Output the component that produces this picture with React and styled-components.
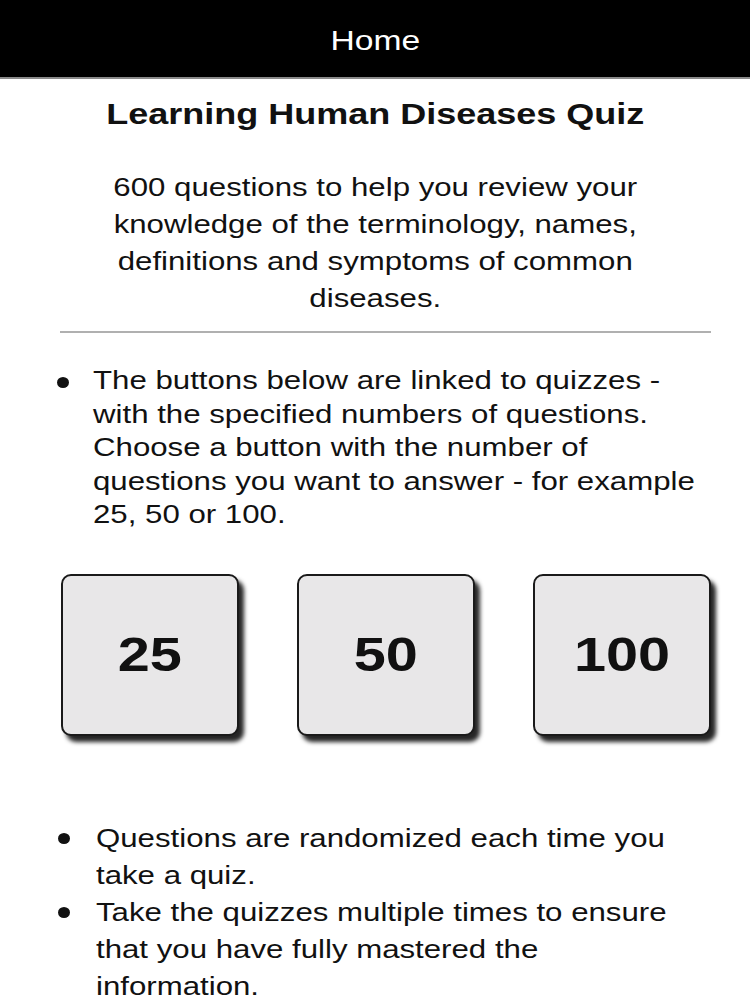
import React from 'react';
import styled, { createGlobalStyle } from 'styled-components';

const GlobalStyle = createGlobalStyle`
    body {
        margin: 0;
        background: #ffffff;
        font-family: "Liberation Sans", Arial, Helvetica, sans-serif;
        color: #111111;
    }
`

const Page = styled.div`
    width: 750px;
    min-height: 1000px;
    overflow: hidden;
`

const Stretch = styled.span`
    display: inline-block;
    transform: scaleX(1.2);
    transform-origin: ${p => p.origin || 'center'};
`

const Header = styled.header`
    height: 79px;
    box-sizing: border-box;
    padding-top: 4px;
    background: #000000;
    border-bottom: 2px solid #8a8a8a;
    display: flex;
    align-items: center;
    justify-content: center;
    color: #ffffff;
    font-size: 28px;
`

const Title = styled.h1`
    margin: 17px 0 0;
    text-align: center;
    font-size: 30px;
    font-weight: bold;
    line-height: 36px;
`

const Intro = styled.p`
    margin: 37px 0 0;
    text-align: center;
    font-size: 26px;
    line-height: 37px;
`

const Divider = styled.hr`
    margin: 14px 39px 0 60px;
    border: none;
    border-top: 2px solid #b0b0b0;
`

const List = styled.ul`
    margin: ${p => p.top}px 0 0;
    padding: 0 0 0 ${p => p.indent}px;
    list-style: none;
    font-size: 26px;
    line-height: ${p => p.lh}px;
    white-space: nowrap;
`

const Item = styled.li`
    position: relative;

    &::before {
        content: '';
        position: absolute;
        left: ${p => p.dot}px;
        top: ${p => p.dotTop}px;
        width: 12px;
        height: 11px;
        border-radius: 50%;
        background: #111111;
    }
`

const ButtonRow = styled.div`
    display: flex;
    gap: 58px;
    padding: 0 0 0 61px;
    margin-top: 42px;
`

const QuizButton = styled.button`
    width: 178px;
    height: 162px;
    background: #e8e7e8;
    border: 2px solid #1a1a1a;
    border-radius: 10px;
    box-shadow: 5px 6px 4px rgba(0, 0, 0, 0.85);
    font-family: "Liberation Sans", Arial, Helvetica, sans-serif;
    font-size: 48px;
    font-weight: bold;
    color: #111111;
    cursor: pointer;
    padding: 0;
`

const quizzes = [25, 50, 100]

const App = () => {
    return (
        <Page>
            <GlobalStyle />
            <Header><Stretch>Home</Stretch></Header>
            <Title><Stretch>Learning Human Diseases Quiz</Stretch></Title>
            <Intro>
                <Stretch>
                    600 questions to help you review your<br />
                    knowledge of the terminology, names,<br />
                    definitions and symptoms of common<br />
                    diseases.
                </Stretch>
            </Intro>
            <Divider />
            <List top={31} indent={93} lh={33.5}>
                <Item dot={-36} dotTop={13}>
                    <Stretch origin="left">
                        The buttons below are linked to quizzes -<br />
                        with the specified numbers of questions.<br />
                        Choose a button with the number of<br />
                        questions you want to answer - for example<br />
                        25, 50 or 100.
                    </Stretch>
                </Item>
            </List>
            <ButtonRow>
                {quizzes.map(n => <QuizButton key={n}><Stretch>{n}</Stretch></QuizButton>)}
            </ButtonRow>
            <List top={84} indent={96} lh={37}>
                <Item dot={-38} dotTop={13}>
                    <Stretch origin="left">Questions are randomized each time you<br />take a quiz.</Stretch>
                </Item>
                <Item dot={-38} dotTop={13}>
                    <Stretch origin="left">Take the quizzes multiple times to ensure<br />that you have fully mastered the<br />information.</Stretch>
                </Item>
            </List>
        </Page>
    )
}

export default App;
